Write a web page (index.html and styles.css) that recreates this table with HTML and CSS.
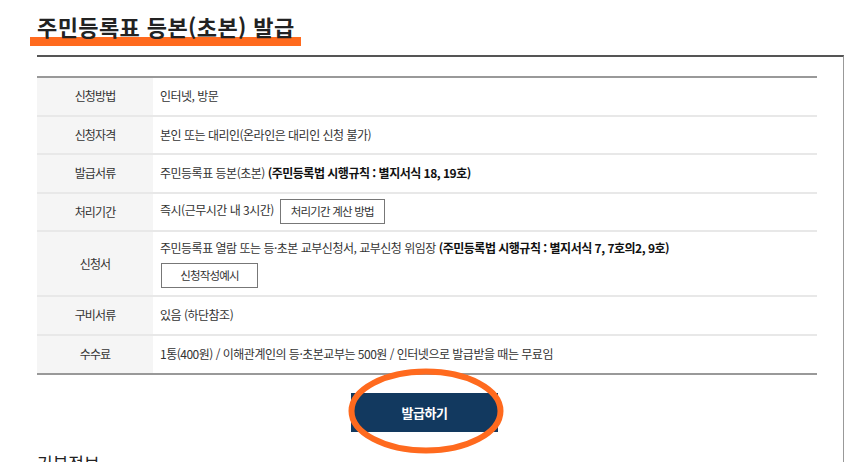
FILE: index.html
```html
<!DOCTYPE html>
<html lang="ko">
<head>
<meta charset="utf-8">
<title>주민등록표 등본(초본) 발급</title>
<link rel="stylesheet" href="styles.css">
</head>
<body>
<div class="page">
  <h1 class="title"><span class="title-text">주민등록표 등본(초본) 발급</span></h1>
  <div class="panel">
    <table class="info">
      <tr><th>신청방법</th><td>인터넷, 방문</td></tr>
      <tr><th>신청자격</th><td>본인 또는 대리인(온라인은 대리인 신청 불가)</td></tr>
      <tr><th>발급서류</th><td>주민등록표 등본(초본) <b>(주민등록법 시행규칙 : 별지서식 18, 19호)</b></td></tr>
      <tr><th>처리기간</th><td>즉시(근무시간 내 3시간) <a class="line-btn btn-calc">처리기간 계산 방법</a></td></tr>
      <tr class="tall"><th>신청서</th><td class="stack"><div class="line">주민등록표 열람 또는 등·초본 교부신청서, 교부신청 위임장 <b>(주민등록법 시행규칙 : 별지서식 7, 7호의2, 9호)</b></div><a class="line-btn btn-sample">신청작성예시</a></td></tr>
      <tr><th>구비서류</th><td>있음 (하단참조)</td></tr>
      <tr class="last"><th>수수료</th><td>1통(400원) / 이해관계인의 등·초본교부는 500원 / 인터넷으로 발급받을 때는 무료임</td></tr>
    </table>
    <div class="actions">
      <a class="issue-btn">발급하기<svg class="ring" viewBox="0 0 156 86" width="156" height="86"><ellipse cx="78" cy="43" rx="74.5" ry="39.5" fill="none" stroke="#ff6a1e" stroke-width="6"/></svg></a>
    </div>
    <h2 class="sub">기본정보</h2>
  </div>
</div>
</body>
</html>
```
FILE: styles.css
```css
html, body {
  margin: 0;
  padding: 0;
  background: #fff;
  overflow: hidden;
}
body {
  font-family: "Noto Sans CJK KR", "Noto Sans", sans-serif;
  color: #333;
}
.title {
  display: flex;
  margin: 0 0 9px;
  padding: 13px 0 0 30px;
  font-size: 22px;
  line-height: 26px;
}
.title-text {
  display: block;
  padding: 0 6px 7px 7px;
  font-weight: bold;
  color: #222;
  letter-spacing: 0.4px;
  background: linear-gradient(to bottom, transparent 24px, #ff6a1e 24px);
}
.panel {
  margin: 0 1px 0 37px;
  padding-top: 19px;
  border-top: 2px solid #555;
  border-right: 1px solid #999;
  height: 460px;
}
.info {
  width: 780px;
  border-collapse: separate;
  border-spacing: 0;
  border-top: 2px solid #999;
  font-size: 12px;
  letter-spacing: -0.5px;
}
.info th, .info td {
  box-sizing: border-box;
  height: 38.5px;
  border-bottom: 2px solid #e8e8e8;
  padding: 0;
  vertical-align: middle;
  line-height: 18px;
}
.info th {
  width: 116px;
  background: #f5f5f5;
  font-weight: normal;
  color: #333;
  text-align: center;
  letter-spacing: -0.9px;
}
.info td {
  padding-left: 7px;
  text-align: left;
  color: #333;
}
.info b {
  color: #111;
}
.info tr.tall th, .info tr.tall td {
  height: 65px;
}
.info td.stack {
  padding-top: 7px;
  padding-bottom: 7px;
}
.info tr.last th, .info tr.last td {
  height: 39.5px;
  border-bottom-color: #999;
}
.line-btn {
  display: inline-block;
  box-sizing: border-box;
  height: 25px;
  line-height: 23px;
  border: 1px solid #777;
  background: #fff;
  color: #333;
  font-size: 11.5px;
  letter-spacing: -0.8px;
  text-align: center;
  vertical-align: middle;
}
.btn-calc {
  width: 105px;
  margin-left: 3px;
}
.btn-sample {
  width: 97px;
  margin-top: 6px;
  margin-left: 1px;
}
.stack .line {
  height: 18px;
}
.actions {
  width: 780px;
  display: flex;
  justify-content: center;
  padding-top: 18px;
}
.issue-btn {
  position: relative;
  display: block;
  width: 147px;
  height: 39px;
  line-height: 39px;
  margin-right: 5px;
  background: #12395f;
  color: #fff;
  font-size: 13px;
  font-weight: bold;
  letter-spacing: -0.5px;
  text-align: center;
}
.ring {
  position: absolute;
  left: -3px;
  top: -25px;
  overflow: visible;
  pointer-events: none;
}
.sub {
  margin: 19px 0 0;
  font-size: 17px;
  line-height: 24px;
  font-weight: normal;
  color: #222;
}
```
